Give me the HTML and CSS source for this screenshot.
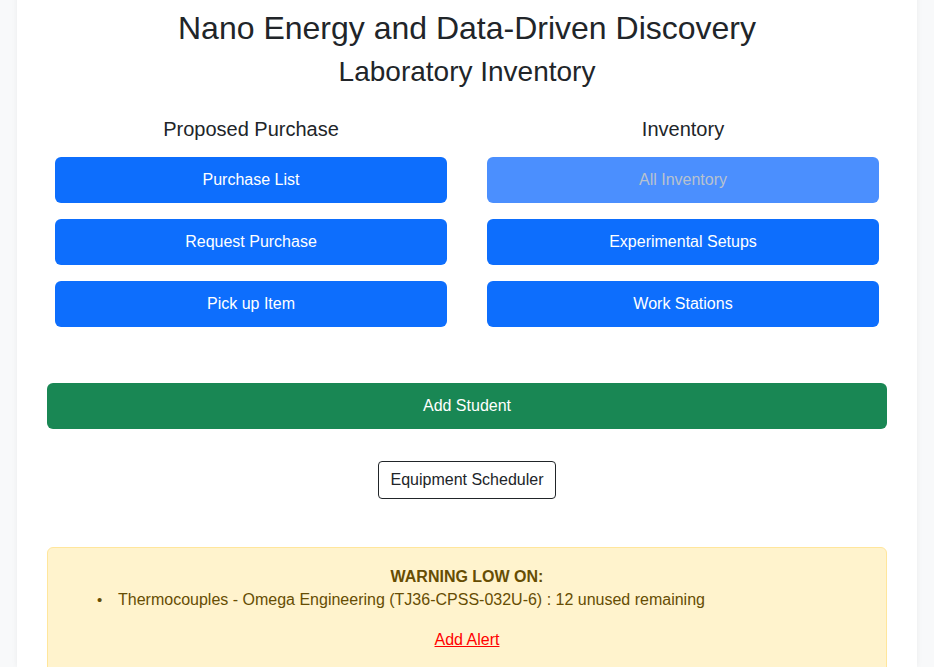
FILE: index.html
```html
<!DOCTYPE html>
<html lang="en">
<head>
<meta charset="utf-8">
<title>Laboratory Inventory</title>
<link rel="stylesheet" href="styles.css">
</head>
<body>
<main class="card">
  <h1 class="title">Nano Energy and Data-Driven Discovery</h1>
  <h2 class="subtitle">Laboratory Inventory</h2>
  <section class="columns">
    <div class="col">
      <h4 class="col-head">Proposed Purchase</h4>
      <a class="btn btn-primary" href="#">Purchase List</a>
      <a class="btn btn-primary" href="#">Request Purchase</a>
      <a class="btn btn-primary" href="#">Pick up Item</a>
    </div>
    <div class="col">
      <h4 class="col-head">Inventory</h4>
      <a class="btn btn-primary disabled" href="#">All Inventory</a>
      <a class="btn btn-primary" href="#">Experimental Setups</a>
      <a class="btn btn-primary" href="#">Work Stations</a>
    </div>
  </section>
  <a class="btn btn-success" href="#">Add Student</a>
  <div class="center-row">
    <a class="btn-outline" href="#">Equipment Scheduler</a>
  </div>
  <div class="alert">
    <div class="alert-head">WARNING LOW ON:</div>
    <ul class="alert-list">
      <li>Thermocouples - Omega Engineering (TJ36-CPSS-032U-6) : 12 unused remaining</li>
    </ul>
    <a class="alert-link" href="#">Add Alert</a>
  </div>
</main>
</body>
</html>
```
FILE: styles.css
```css
html, body {
  margin: 0;
  padding: 0;
  background: #f8f9fa;
  font-family: "Liberation Sans", Arial, sans-serif;
  color: #212529;
  font-size: 16px;
  overflow: hidden;
}
.card {
  width: 900px;
  margin: -10px 0 0 17px;
  background: #fff;
  box-sizing: border-box;
  padding: 10px 30px 0;
  height: 677px;
  overflow: hidden;
  box-shadow: 0 0 6px rgba(0,0,0,0.06);
}
.title {
  margin: 0;
  padding-top: 9px;
  font-size: 32px;
  font-weight: 400;
  text-align: center;
  line-height: 1.2;
}
.subtitle {
  margin: 8px 0 0;
  font-size: 28px;
  font-weight: 400;
  text-align: center;
  line-height: 1.2;
}
.columns {
  display: grid;
  grid-template-columns: 1fr 1fr;
  column-gap: 40px;
  padding: 0 8px;
  margin-top: 28px;
}
.col {
  display: flex;
  flex-direction: column;
  gap: 16px;
}
.col-head {
  margin: 0;
  font-size: 20px;
  font-weight: 400;
  text-align: center;
  line-height: 1.2;
}
.btn {
  display: flex;
  align-items: center;
  justify-content: center;
  height: 46px;
  border-radius: 6px;
  color: #fff;
  text-decoration: none;
  font-size: 16px;
}
.btn-primary { background: #0d6efd; }
.btn-primary.disabled { background: #4b8ffe; color: #b8c2cf; }
.btn-success { background: #198754; margin-top: 56px; }
.center-row {
  display: flex;
  justify-content: center;
  margin-top: 32px;
}
.btn-outline {
  display: inline-flex;
  align-items: center;
  height: 38px;
  box-sizing: border-box;
  padding: 0 12px;
  border: 1px solid #212529;
  border-radius: 4px;
  color: #212529;
  text-decoration: none;
}
.alert {
  margin-top: 48px;
  background: #fff3cd;
  border: 1px solid #ffe69c;
  border-radius: 6px;
  color: #664d03;
  padding: 20px 16px 24px;
  text-align: center;
}
.alert-head { font-weight: 700; }
.alert-list {
  text-align: left;
  margin: 5px 0 22px;
  padding-left: 54px;
  list-style: none;
}
.alert-list li {
  display: flex;
  align-items: baseline;
}
.alert-list li::before {
  content: "\2022";
  width: 20px;
  margin-left: -24px;
  margin-right: 4px;
  font-size: 15px;
  text-align: left;
  padding-left: 3px;
  box-sizing: border-box;
}
.alert-link { color: #ff0000; }
```
